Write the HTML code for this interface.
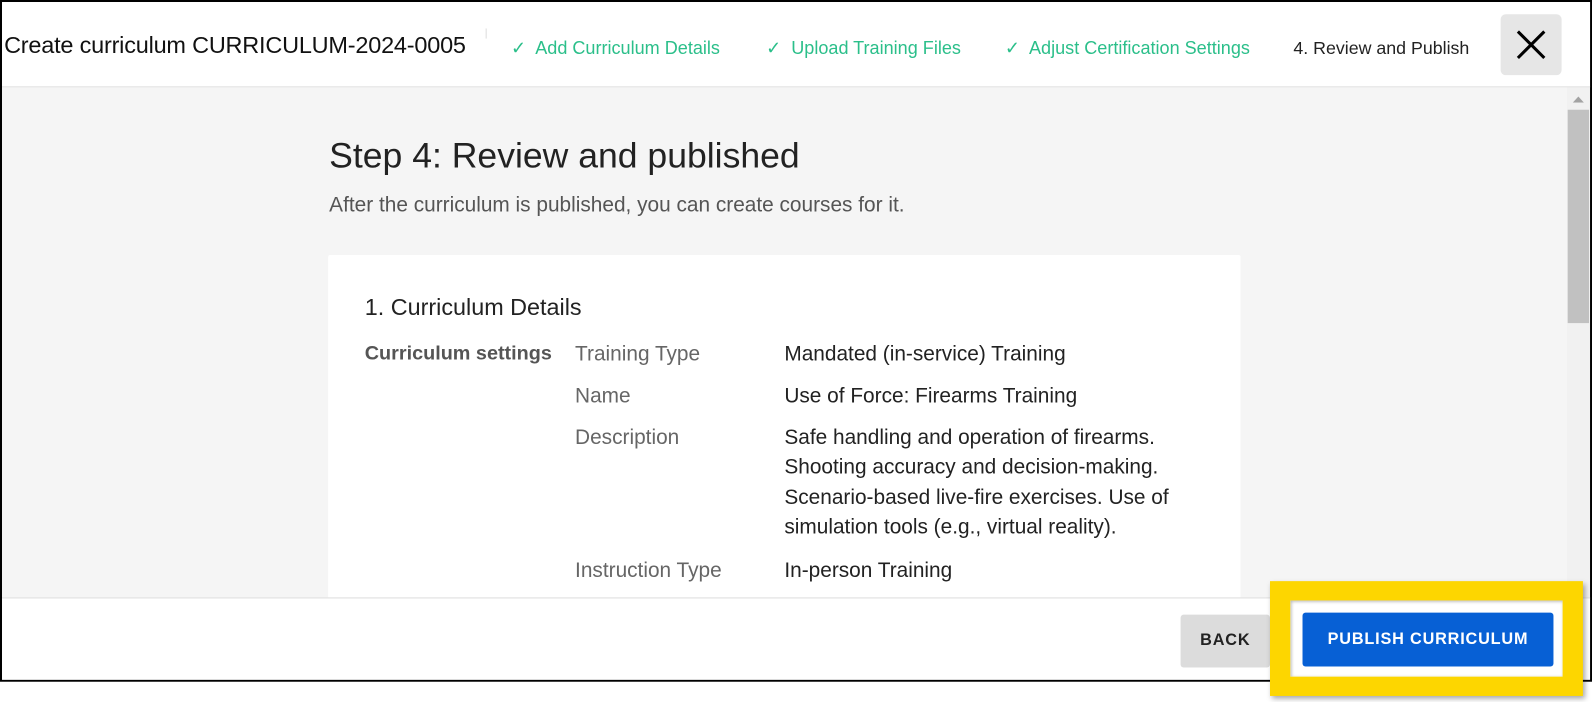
<!DOCTYPE html>
<html><head><meta charset="utf-8"><style>
*{box-sizing:border-box;margin:0;padding:0}
body{width:1592px;height:702px;background:#fff;font-family:"Liberation Sans",sans-serif;position:relative;overflow:hidden}
.wrap{position:absolute;left:0;top:0;width:1567px;height:691px;transform:scale(1.016);transform-origin:0 0}
.frame{position:absolute;left:0;top:0;width:1567px;height:671px;border:2px solid #000;background:#fff;overflow:hidden}
.abs{position:absolute;white-space:nowrap}
.hdr{position:absolute;left:0;top:0;width:1565px;height:84px;border-bottom:1px solid #ddd;background:#fff}
.step{color:#2bbf8a;font-size:17.8px;top:35px}
.content{position:absolute;left:0;top:84px;width:1540px;height:502px;background:#f5f5f5}
.card{position:absolute;left:321px;top:165px;width:898px;height:400px;background:#fff;border-radius:2px}
.l2{color:#666;font-size:20.5px}
.l3{color:#222;font-size:20.5px}
.foot{position:absolute;left:0;top:586px;width:1565px;height:83px;border-top:1px solid #ddd;background:#fff}
</style></head><body>
<div class="wrap">
<div class="frame">
 <div class="hdr">
  <div class="abs" style="left:2px;top:29px;font-size:23.1px;color:#111;letter-spacing:-0.2px">Create curriculum CURRICULUM-2024-0005</div>
  <div class="abs" style="left:476px;top:26px;width:1px;height:10px;background:#ddd"></div>
  <div class="abs step" style="left:501px">✓&nbsp; Add Curriculum Details</div>
  <div class="abs step" style="left:752px">✓&nbsp; Upload Training Files</div>
  <div class="abs step" style="left:987px">✓&nbsp; Adjust Certification Settings</div>
  <div class="abs" style="left:1271px;top:35px;font-size:17.5px;color:#222">4. Review and Publish</div>
  <div class="abs" style="left:1475px;top:12px;width:60px;height:60px;background:#e6e6e6;border-radius:5px">
   <svg width="60" height="60" viewBox="0 0 60 60"><path d="M17 17L43 43M43 17L17 43" stroke="#000" stroke-width="3"/></svg>
  </div>
 </div>
 <div class="content">
  <div class="abs" style="left:322px;top:48px;font-size:35px;color:#222">Step 4: Review and published</div>
  <div class="abs" style="left:322px;top:104px;font-size:20.5px;color:#555">After the curriculum is published, you can create courses for it.</div>
  <div class="card">
   <div class="abs" style="left:36px;top:38px;font-size:23px;color:#222">1. Curriculum Details</div>
   <div class="abs" style="left:36px;top:86px;font-size:19.5px;font-weight:bold;color:#555">Curriculum settings</div>
   <div class="abs l2" style="left:243px;top:86px">Training Type</div>
   <div class="abs l3" style="left:449px;top:86px">Mandated (in-service) Training</div>
   <div class="abs l2" style="left:243px;top:127px">Name</div>
   <div class="abs l3" style="left:449px;top:127px">Use of Force: Firearms Training</div>
   <div class="abs l2" style="left:243px;top:168px">Description</div>
   <div class="abs l3" style="left:449px;top:165px;line-height:29.3px">Safe handling and operation of firearms.<br>Shooting accuracy and decision-making.<br>Scenario-based live-fire exercises. Use of<br>simulation tools (e.g., virtual reality).</div>
   <div class="abs l2" style="left:243px;top:299px">Instruction Type</div>
   <div class="abs l3" style="left:449px;top:299px">In-person Training</div>
  </div>
 </div>
 <div class="abs" style="left:1540px;top:84px;width:23px;height:502px;background:#f1f1f1">
  <svg class="abs" style="left:6px;top:8px" width="11" height="7"><path d="M0 7L5.5 1L11 7Z" fill="#a3a3a3"/></svg>
  <div class="abs" style="left:1px;top:22px;width:21px;height:210px;background:#c1c1c1"></div>
 </div>
 <div class="foot">
  <div class="abs" style="left:1160px;top:16px;width:88px;height:52px;background:#dcdcdc;border-radius:3px;font-size:16px;font-weight:bold;color:#222;letter-spacing:0.8px;text-align:center;line-height:52px">BACK</div>
 </div>
</div>
<div class="abs" style="left:1250px;top:572px;width:308px;height:113px;background:#fdd600;box-shadow:2px 3px 5px rgba(0,0,0,.35)">
 <div class="abs" style="left:20px;top:19px;width:268px;height:75px;background:#fff;box-shadow:inset 1px 1px 3px rgba(0,0,0,.3)">
  <div class="abs" style="left:12px;top:12px;width:247px;height:53px;background:#0760d5;border-radius:3px;color:#fff;font-size:16px;font-weight:bold;letter-spacing:0.8px;text-align:center;line-height:53px">PUBLISH CURRICULUM</div>
 </div>
</div>
</div>
</body></html>
